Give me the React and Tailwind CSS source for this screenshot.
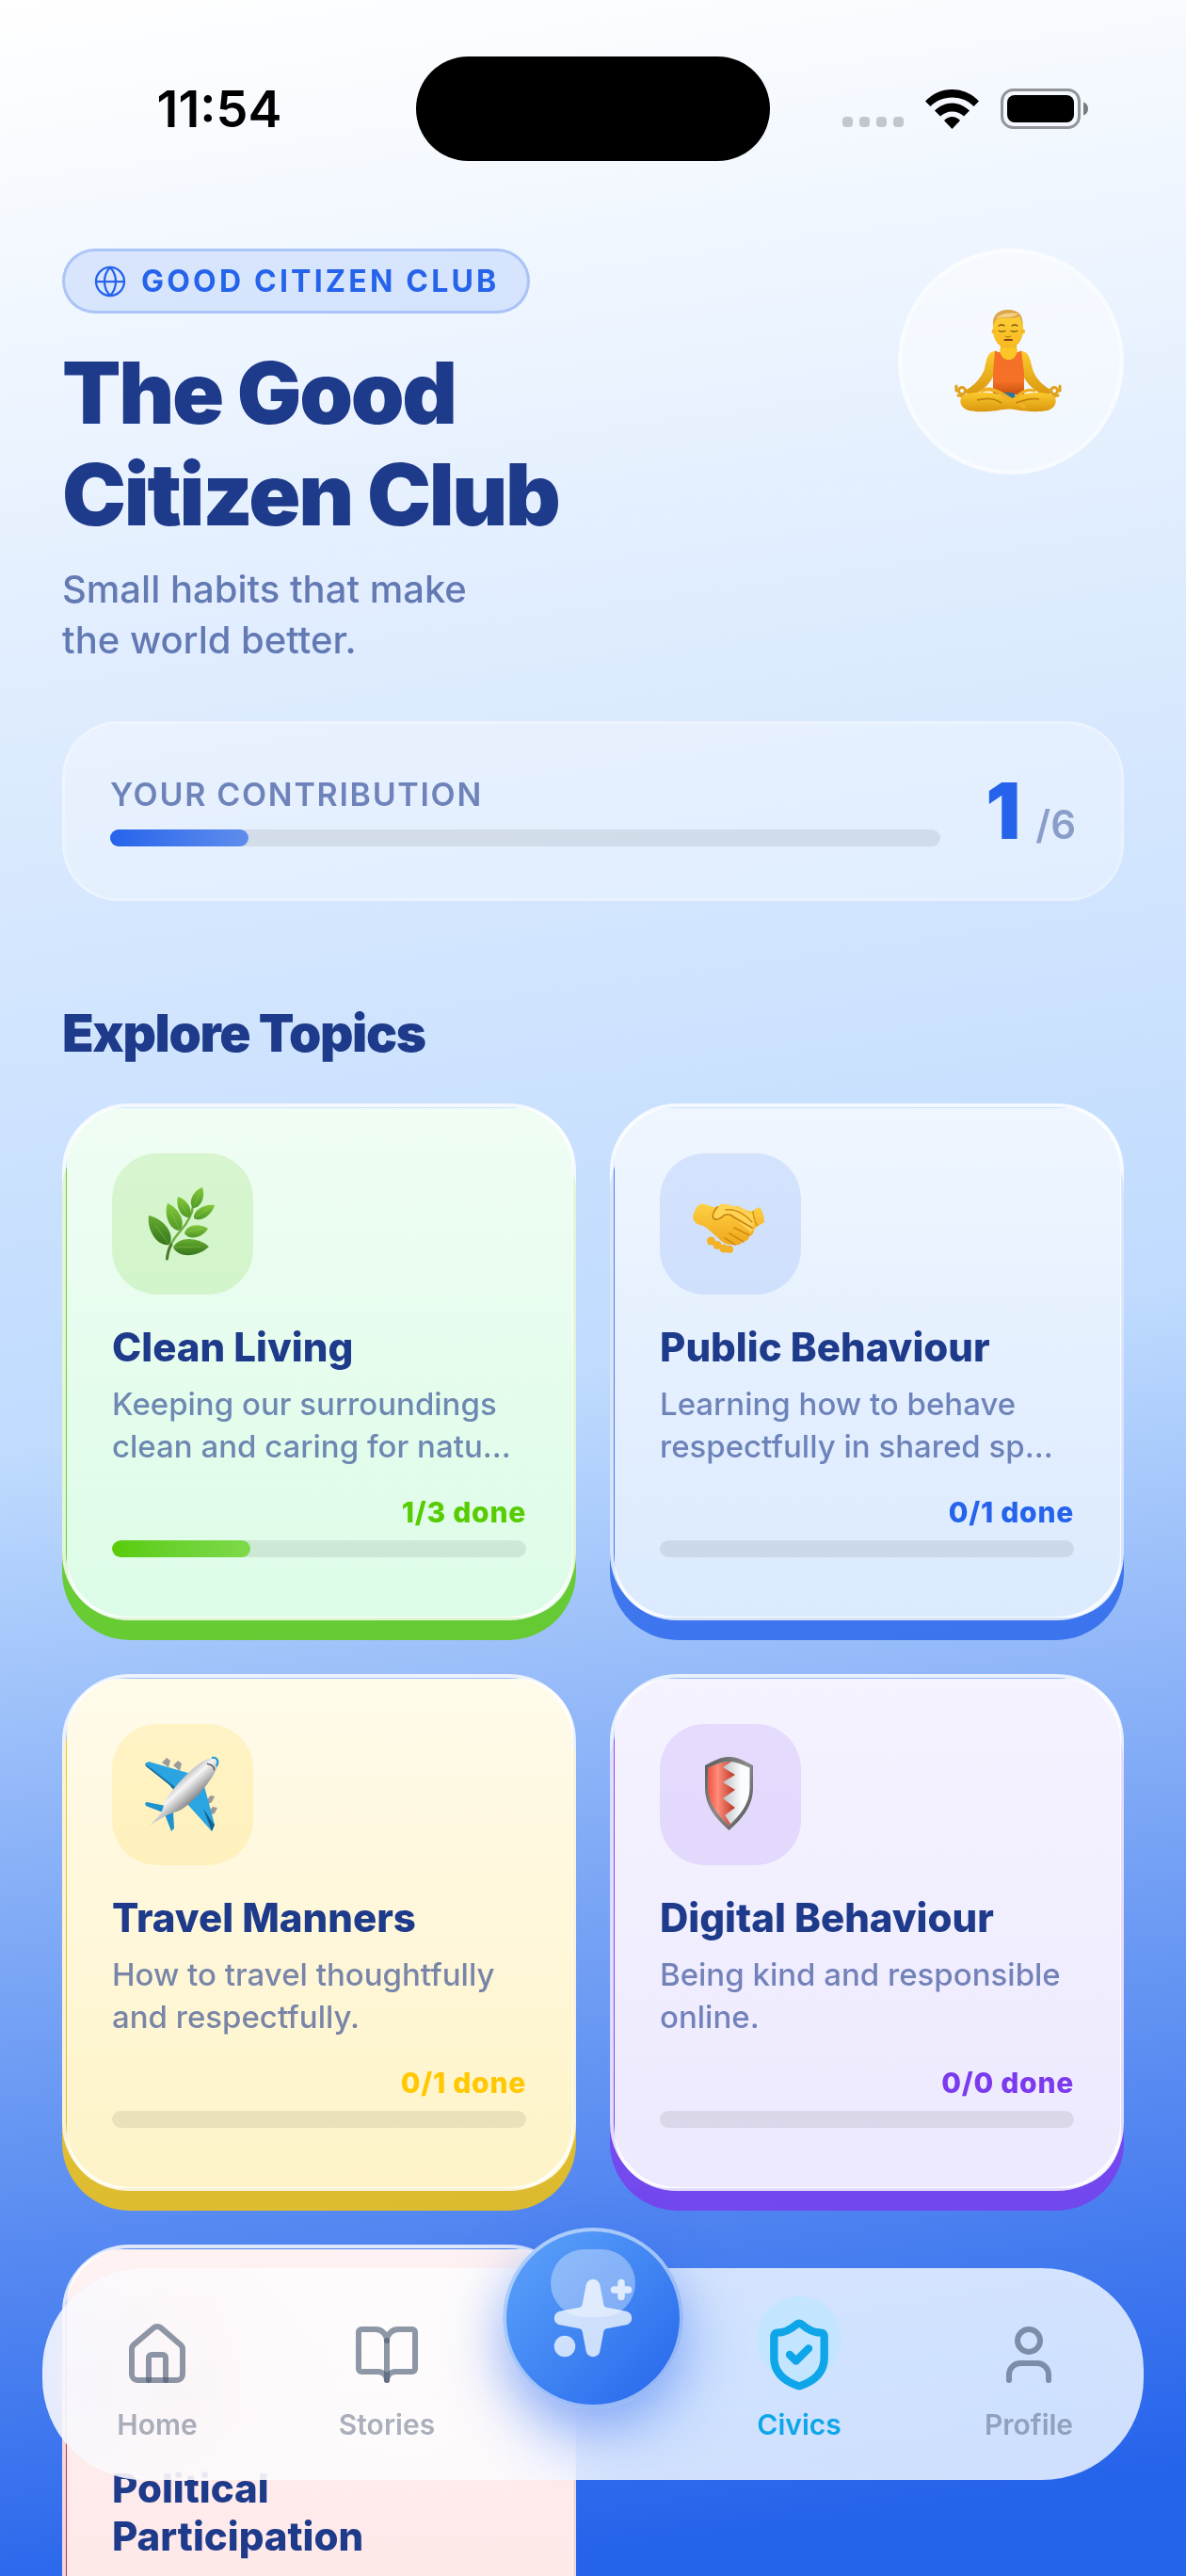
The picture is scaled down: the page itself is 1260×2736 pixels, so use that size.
import React from "react";
import { BookOpen, Globe, House, ShieldCheck, Sparkles, User } from "lucide-react";

/* ---------- illustrations ---------- */

function leafPath([tx, ty], [bx, by], w) {
  const dx = tx - bx;
  const dy = ty - by;
  const len = Math.hypot(dx, dy);
  const nx = (-dy / len) * w;
  const ny = (dx / len) * w;
  const at = (k, s) => `${bx + dx * k + nx * s} ${by + dy * k + ny * s}`;
  return `M${bx} ${by}C${at(0.15, 1)} ${at(0.7, 0.9)} ${tx} ${ty}C${at(0.7, -0.9)} ${at(0.15, -1)} ${bx} ${by}Z`;
}

const LEAVES = [
  { tip: [39, 66], base: [61, 97], w: 12, dark: true },
  { tip: [59, 53], base: [72, 82], w: 10 },
  { tip: [70, 46], base: [82, 68], w: 8 },
  { tip: [96, 36], base: [86, 58], w: 8 },
  { tip: [109, 55], base: [87, 69], w: 8 },
  { tip: [102, 80], base: [77, 85], w: 9 },
  { tip: [103, 99], base: [65, 100], w: 12, dark: true },
];

function HerbArt() {
  return (
    <svg viewBox="0 0 150 150" className="size-full" aria-hidden="true">
      <defs>
        <linearGradient id="leafLight" x1="0" y1="0" x2="0" y2="1">
          <stop offset="0" stopColor="#82ca3a" />
          <stop offset="1" stopColor="#4f9626" />
        </linearGradient>
        <linearGradient id="leafDark" x1="0" y1="0" x2="0" y2="1">
          <stop offset="0" stopColor="#66ac30" />
          <stop offset="1" stopColor="#36761c" />
        </linearGradient>
      </defs>
      <path d="M58.500 112C60 98 66 90 73 82S85 66 86 56" fill="none" stroke="#6fae3c" strokeWidth="2.500" strokeLinecap="round" />
      <path d="M58.500 112C59 106 60.500 101 63 97" fill="none" stroke="#4b7a2c" strokeWidth="3" strokeLinecap="round" />
      {LEAVES.map((l) => (
        <path key={l.tip.join()} d={leafPath(l.tip, l.base, l.w)} fill={l.dark ? "url(#leafDark)" : "url(#leafLight)"} />
      ))}
      <path d="M61 97 46 76M72 82 63 62M66 100 94 99M79 84 96 80M89 68 102 59M87 56 93 43M81 67 73 53" fill="none" stroke="#9bd35a" strokeOpacity=".4" strokeWidth="1" />
    </svg>
  );
}

function HandshakeArt() {
  return (
    <svg viewBox="0 0 150 150" className="size-full" aria-hidden="true">
      <defs>
        <linearGradient id="skin" x1="0" y1="0" x2="0" y2="1">
          <stop offset="0" stopColor="#fed044" />
          <stop offset="1" stopColor="#f0a81c" />
        </linearGradient>
      </defs>
      <g fill="#f3b227">
        <circle cx="54.500" cy="93" r="4.500" />
        <circle cx="61" cy="97.500" r="4.500" />
        <circle cx="68" cy="101" r="4.500" />
        <circle cx="74" cy="102" r="4" />
      </g>
      <path d="M35 68C36 61 40 54 45 53.500C50 54 55 58 61 57L84 56C89 60 95 62 99 61C101 59 104 57 106 57.500C109 61 111 67 111 73C107 76 103 77 100 81C100 86 97 88 95 87.500C95 92 91 94 88 93C87 97 82 98 78 97C72 98 66 94 62 90C56 85 51 79 46 77C41 76 36 74 35 68Z" fill="url(#skin)" />
      <path d="M56 68C58 61 60 55 66 54C74 53 80 58 90 61C97 64 99 63 100 70C100 76 99 80 97 84L78 68C73 65 69 67 66 69C62 72 56 73 56 68Z" fill="#ffd455" />
      <path d="M61 57C57 62 55 66 57 69C60 72 65 69 68 66C72 64 76 65 79 68L98 79" fill="none" stroke="#c98410" strokeWidth="1.800" strokeLinecap="round" />
      <path d="M79 79 95 87M74 85 89 94M69 90 80 97M70 60C81 58 92 66 98 73" fill="none" stroke="#cf8a12" strokeWidth="1.500" strokeLinecap="round" />
      <path d="M99 61C99 66 101 74 104 77" fill="none" stroke="#d89518" strokeWidth="1.500" />
    </svg>
  );
}

function PlaneArt() {
  return (
    <svg viewBox="0 0 150 150" className="size-full" aria-hidden="true">
      <defs>
        <linearGradient id="hull" gradientUnits="userSpaceOnUse" x1="66" y1="60" x2="86" y2="82">
          <stop offset="0" stopColor="#a9a9ab" />
          <stop offset=".4" stopColor="#f6f6f7" />
          <stop offset="1" stopColor="#858588" />
        </linearGradient>
      </defs>
      <g fill="#9b9a9b">
        <path d="m53 41 5-5 4 3-2 7ZM65 44l5-5 4 3-2 8ZM101 80l4-4 4 1-3 6-5 3ZM104 91l3-3 5 1-3 6-6 2Z" />
      </g>
      <path d="M35 42 39 40 84 53 66 71 60 63Z" fill="#2ba4e2" />
      <path d="M35 42 36 45 60 64 66 70 67 67Z" fill="#166f9e" />
      <path d="M98 66 109 107 106 114 79 84Z" fill="#2ba4e2" />
      <path d="M106 114 109 107 107 105 97 90Z" fill="#15618b" />
      <path d="M35 84 37 83 57 87 54 94 36 87Z" fill="#1d93cf" />
      <path d="M56 96 65 93 66 111 63 114Z" fill="#1d93cf" />
      <path d="M112 37C115 45 106 58 98 68C89 79 76 92 66 94C62 95 57 97 40 108C52 96 54 92 55 86C57 78 70 63 80 53C92 42 103 33 112 37Z" fill="url(#hull)" />
      <path d="M106 36C112 35 114 40 111 45" fill="none" stroke="#2098d4" strokeWidth="2" />
      <path d="M101 42C103 44 104 42 107 45S107 47 109 49" fill="none" stroke="#555" strokeWidth="1.500" />
    </svg>
  );
}

function ShieldArt() {
  return (
    <svg viewBox="0 0 150 150" className="size-full" aria-hidden="true">
      <defs>
        <linearGradient id="rim" x1="0" y1="0" x2="1" y2="1">
          <stop offset="0" stopColor="#595959" />
          <stop offset=".5" stopColor="#8b8b8b" />
          <stop offset="1" stopColor="#4c4c4c" />
        </linearGradient>
        <linearGradient id="silver" x1="0" y1="0" x2="1" y2="0">
          <stop offset=".2" stopColor="#a9afb2" />
          <stop offset=".8" stopColor="#fbfcfd" />
        </linearGradient>
        <linearGradient id="red" x1="0" y1="0" x2="1" y2="0">
          <stop offset="0" stopColor="#f2553f" />
          <stop offset=".35" stopColor="#ff8c7b" />
          <stop offset="1" stopColor="#b93622" />
        </linearGradient>
      </defs>
      <path d="M48 44C56 40 64 35 73.500 35S91 40 99 44V68C99 88 86 102 73.500 113C61 102 48 88 48 68Z" fill="url(#rim)" />
      <path d="M51.500 46.500C60 43 66 40 73.500 40S87 43 95.500 46.500V68C95.500 85 85 97 73.500 108C62 97 51.500 85 51.500 68Z" fill="url(#silver)" />
      <path d="M76 40C66 40 60 43 51.500 46.500V68C51.500 85 62 97 73.500 108L75 106 69 97 80 89 67 79 80 70 67 62 80 54 67 46Z" fill="url(#red)" />
    </svg>
  );
}

function BallotArt() {
  return (
    <svg viewBox="0 0 150 150" className="size-full" aria-hidden="true">
      <path d="M40 68h70v44H40Z" fill="#9aa3ad" />
      <path d="M58 38h34v38H58Z" fill="#fff" />
    </svg>
  );
}

function YogiArt() {
  return (
    <svg viewBox="0 0 240 240" className="size-full" aria-hidden="true">
      <defs>
        <linearGradient id="face" x1="0" y1="0" x2="0" y2="1">
          <stop offset="0" stopColor="#ffd23a" />
          <stop offset="1" stopColor="#f6b91f" />
        </linearGradient>
        <linearGradient id="limb" x1="0" y1="0" x2="0" y2="1">
          <stop offset="0" stopColor="#fccb2c" />
          <stop offset="1" stopColor="#d9960f" />
        </linearGradient>
        <linearGradient id="vest" x1="0" y1="0" x2="0" y2="1">
          <stop offset="0" stopColor="#f4702a" />
          <stop offset=".7" stopColor="#f57126" />
          <stop offset="1" stopColor="#c9500f" />
        </linearGradient>
      </defs>
      <path d="M104 109C96 109 94 116 92 128C88 138 79 148 70 151L76 157C88 153 99 144 103 131Z" fill="url(#limb)" />
      <path d="M130 109C139 109 140 116 143 128C146 138 156 148 165 151L158 157C147 153 136 144 131 131Z" fill="url(#limb)" />
      <g fill="none" stroke="#e0a21a" strokeWidth="3" strokeLinecap="round">
        <circle cx="68" cy="151" r="3.500" />
        <circle cx="166" cy="151" r="3.500" />
        <path d="M62 146v5M64 156l8 1M172 146v5M170 156l-8 1" />
      </g>
      <path d="M109 98h17v14h-17Z" fill="#e5a51a" />
      <path d="M103 108C106 112 129 112 131 108L134 132V155H101V132Z" fill="url(#vest)" />
      <path d="M108 107C109 122 126 122 127 107L124 104H111Z" fill="#fcc629" />
      <path d="M112 153h11l4 8-4 9h-12l-4-9Z" fill="#32759b" />
      <path d="M68 157C75 152 92 152 104 154L132 166C126 171 115 170 106 172C90 174 76 174 71 170C66 167 65 161 68 157Z" fill="url(#limb)" />
      <path d="M166 157C158 152 140 152 128 156L112 163C106 166 110 169 124 171C140 174 158 174 163 170C168 167 169 161 166 157Z" fill="url(#limb)" />
      <path d="M89 151C98 147 107 152 116 158S131 166 134 168" fill="none" stroke="#f0b021" strokeWidth="4" strokeLinecap="round" />
      <path d="M145 151C137 148 130 154 126 157" fill="none" stroke="#eeb021" strokeWidth="3" strokeLinecap="round" />
      <path d="M84 161C95 158 103 159 110 164M150 160C140 158 132 162 125 164" fill="none" stroke="#ba7c0b" strokeWidth="1.500" />
      <path d="M101 84C101 72 106 66 117 66S133 72 133 84C134 97 126 106 117 106S100 97 101 84Z" fill="url(#face)" />
      <path d="M101 82C100 70 107 65 117 65S134 70 132 82C131 78 131 75 129 72C122 76 111 72 105 75C103 77 102 79 101 82Z" fill="#dca548" />
      <path d="M104 74C109 68 121 68 128 69C122 75 111 72 104 74Z" fill="#f3d184" />
      <circle cx="102" cy="88" r="2.500" fill="#f5ba22" />
      <circle cx="132.500" cy="88" r="2.500" fill="#f5ba22" />
      <path d="M107 82q3-2 6 0M121 82q3-2 6 0M107 87.500q3 1.500 7 0M120 87.500q3 1.500 7 0" fill="none" stroke="#7a5410" strokeWidth="1.300" strokeLinecap="round" />
      <path d="M114 93q3 2 6 0" fill="none" stroke="#b97d12" strokeWidth="1.500" />
      <path d="M113.500 97h7.500" stroke="#84421b" strokeWidth="2" strokeLinecap="round" />
    </svg>
  );
}

/* ---------- status bar ---------- */

function StatusBar() {
  return (
    <div className="flex items-center pt-[60px]">
      <div className="flex-1">
        <div className="pl-6 text-center text-[54px]/[60px] font-semibold text-black">11:54</div>
      </div>
      <div className="h-[111px] w-[376px] rounded-full bg-black" />
      <div className="flex-1">
        <div className="flex items-center pl-[77px]">
          <div className="flex gap-[7px] pt-7">
            <span className="size-[11px] rounded-sm bg-black/20" />
            <span className="size-[11px] rounded-sm bg-black/20" />
            <span className="size-[11px] rounded-sm bg-black/20" />
            <span className="size-[11px] rounded-sm bg-black/20" />
          </div>
          <svg viewBox="0 0 57 42" className="ml-[23px] h-[42px] w-[57px]" aria-label="Wi-Fi">
            <path d="M28.500 0C39.500 0 49.500 4.500 57 12.500L51.500 18C45.500 12 37.500 8.500 28.500 8.500S11.500 12 5.500 18L0 12.500C7.500 4.500 17.500 0 28.500 0Z" />
            <path d="M28.500 14.500C35.500 14.500 42 17.500 47 22.500L41 28.500C37.500 25.500 33.500 23.500 28.500 23.500S19.500 25.500 16 28.500L10 22.500C15 17.500 21.500 14.500 28.500 14.500Z" />
            <path d="M28.500 29C31.500 29 34.500 30.500 37 33L28.500 42L20 33C22.500 30.500 25.500 29 28.500 29Z" />
          </svg>
          <svg viewBox="0 0 94 43" className="ml-[23px] h-[43px] w-[94px]" aria-label="Battery">
            <rect x="1.500" y="1.500" width="82" height="40" rx="12" fill="none" stroke="#000" strokeOpacity=".4" strokeWidth="3" />
            <rect x="7" y="7" width="71" height="29" rx="8" />
            <path d="M88 14.500C91 15.500 93 18 93 21.500S91 27.500 88 28.500Z" fillOpacity=".5" />
          </svg>
        </div>
      </div>
    </div>
  );
}

/* ---------- topics ---------- */

const TOPICS = [
  {
    title: "Clean Living",
    text: "Keeping our surroundings clean and caring for natu...",
    done: 1,
    total: 3,
    Art: HerbArt,
    face: "bg-linear-to-b from-[#f0fdf4] to-[#dcfce7]",
    edge: "bg-[#58cc02]/80",
    tile: "bg-[#58cc02]/15",
    label: "text-[#58cc02]",
    bar: "bg-linear-to-r from-[#58cc02] to-[#7ed94a]",
  },
  {
    title: "Public Behaviour",
    text: "Learning how to behave respectfully in shared sp...",
    done: 0,
    total: 1,
    Art: HandshakeArt,
    face: "bg-linear-to-b from-[#eff6ff] to-[#dbeafe]",
    edge: "bg-[#2563eb]/80",
    tile: "bg-[#2563eb]/12",
    label: "text-[#2563eb]",
    bar: "bg-[#2563eb]",
  },
  {
    title: "Travel Manners",
    text: "How to travel thoughtfully and respectfully.",
    done: 0,
    total: 1,
    Art: PlaneArt,
    face: "bg-linear-to-b from-[#fffbeb] to-[#fef3c7]",
    edge: "bg-[#ffc800]/80",
    tile: "bg-[#ffc800]/15",
    label: "text-[#ffc800]",
    bar: "bg-[#ffc800]",
  },
  {
    title: "Digital Behaviour",
    text: "Being kind and responsible online.",
    done: 0,
    total: 0,
    Art: ShieldArt,
    face: "bg-linear-to-b from-[#f5f3ff] to-[#ede9fe]",
    edge: "bg-[#7c3aed]/80",
    tile: "bg-[#7c3aed]/12",
    label: "text-[#7c3aed]",
    bar: "bg-[#7c3aed]",
  },
  {
    title: "Political\nParticipation",
    text: "",
    done: 0,
    total: 1,
    Art: BallotArt,
    face: "bg-linear-to-b from-[#fef2f2] to-[#fee2e2]",
    edge: "bg-[#dc2626]/80",
    tile: "bg-[#dc2626]/12",
    label: "text-[#dc2626]",
    bar: "bg-[#dc2626]",
  },
];

function TopicCard({ title, text, done, total, Art, face, edge, tile, label, bar }) {
  const percent = total ? (done / total) * 100 : 0;
  return (
    <a href="#topic" className="relative isolate mb-[21px] block px-[53px] pt-[53px] pb-[67px]">
      <span className={`absolute inset-x-0 top-[21px] -bottom-[21px] -z-30 rounded-[72px] ${edge}`} />
      <span className={`absolute top-[5px] right-[3px] bottom-[3px] left-[5px] -z-20 rounded-[58px] ${face}`} />
      <span className="absolute inset-0 -z-10 rounded-[72px] border-4 border-white/80" />
      <div className={`size-[150px] rounded-[48px] ${tile}`}>
        <Art />
      </div>
      <h3 className="mt-[30px] text-[42px]/[51px] font-extrabold whitespace-pre-line text-[#1e3a8a]">{title}</h3>
      <p className="mt-[13px] line-clamp-2 h-[90px] text-[33px]/[45px] font-medium text-[#1e3a8a]/60">{text}</p>
      <div className={`mt-[29px] text-right text-[30px]/[36px] font-extrabold tracking-wide ${label}`}>
        {done}/{total} done
      </div>
      <div className="mt-3 h-[18px] overflow-hidden rounded-full bg-black/8">
        <div className={`h-full rounded-full ${bar}`} style={{ width: `${percent}%` }} />
      </div>
    </a>
  );
}

/* ---------- bottom navigation ---------- */

function NavItem({ Icon, label }) {
  return (
    <button type="button" className="flex flex-1 flex-col items-center pt-14 text-slate-600/45">
      <Icon className="size-[72px] text-slate-600/60" strokeWidth={2} />
      <span className="mt-5 text-[30px]/[36px] font-semibold">{label}</span>
    </button>
  );
}

function ActiveNavItem({ Icon, label }) {
  return (
    <button type="button" aria-current="page" className="relative flex flex-1 flex-col items-center pt-[52px] text-[#0ea5e9]">
      <span className="absolute top-[30px] size-[90px] rounded-full bg-[#a5ecff]/30" />
      <Icon className="relative size-20" strokeWidth={2.5} />
      <span className="mt-4 text-[30px]/[36px] font-semibold">{label}</span>
    </button>
  );
}

function BottomNav() {
  return (
    <nav className="absolute inset-x-[45px] bottom-[102px] z-20 h-[225px]">
      <div className="absolute inset-0 rounded-[108px] bg-[#fcfeff]/80 backdrop-blur-[60px] backdrop-saturate-150" />
      <div className="relative flex h-full">
        <NavItem Icon={House} label="Home" />
        <NavItem Icon={BookOpen} label="Stories" />
        <div className="flex w-[194px] justify-center">
          <button
            type="button"
            aria-label="Create"
            className="relative -mt-[43px] flex size-48 items-center justify-center rounded-full border-4 border-white/50 bg-linear-to-br from-[#60a5fa] to-[#2563eb] bg-origin-border shadow-[0_24px_60px_rgba(37,99,235,0.5)]"
          >
            <span className="absolute top-[19px] h-[72px] w-[90px] rounded-[36px] bg-white/35" />
            <Sparkles className="relative size-[90px] fill-current text-white opacity-75" />
          </button>
        </div>
        <ActiveNavItem Icon={ShieldCheck} label="Civics" />
        <NavItem Icon={User} label="Profile" />
      </div>
    </nav>
  );
}

/* ---------- screen ---------- */

export default function App() {
  return (
    <div className="relative h-screen overflow-hidden bg-[linear-gradient(172deg,#ffffff_0%,#dbeafe_29%,#bfdbfe_53%,#2563eb_96%)] font-['Inter',sans-serif]">
      <div className="h-full overflow-y-auto pb-80 [scrollbar-width:none]">
        <StatusBar />

        <main className="px-[66px] pt-[93px]">
          <header className="flex items-start justify-between">
            <div>
              <div className="inline-flex h-[69px] items-center gap-[15px] rounded-full border-3 border-[#2563eb]/25 bg-[#2563eb]/12 px-[30px] text-[#2563eb]">
                <Globe className="size-9" strokeWidth={1.5} />
                <span className="text-[32px]/[36px] font-bold tracking-widest">GOOD CITIZEN CLUB</span>
              </div>
              <h1 className="mt-[30px] text-[91px]/[108px] font-black tracking-tight text-[#1e3a8a]">
                The Good
                <br />
                Citizen Club
              </h1>
              <p className="mt-5 text-[40px]/[54px] font-medium text-[#1e3a8a]/65">
                Small habits that make
                <br />
                the world better.
              </p>
            </div>
            <div className="size-60 shrink-0 rounded-full border-[5px] border-white/70 bg-white/50 bg-clip-padding">
              <div className="-m-[5px] size-60">
                <YogiArt />
              </div>
            </div>
          </header>

          <section className="mt-[59px] flex h-[191px] items-center gap-12 rounded-[60px] border-3 border-white/50 bg-white/35 bg-clip-padding px-12">
            <div className="flex-1 pt-0.5">
              <h2 className="text-[34px]/[36px] font-semibold tracking-wider text-[#1e3a8a]/60">YOUR CONTRIBUTION</h2>
              <div className="mt-[19px] h-[18px] rounded-full bg-black/8">
                <div className="h-full w-1/6 rounded-full bg-linear-to-r from-[#2563eb] to-[#5f8ded]" />
              </div>
            </div>
            <div className="flex items-baseline gap-4">
              <span className="text-[82px]/[84px] font-black text-[#2563eb]">1</span>
              <span className="text-[42px]/[42px] font-semibold text-[#1e3a8a]/45">/6</span>
            </div>
          </section>

          <h2 className="mt-[110px] text-[55px]/[60px] font-black tracking-tight text-[#1e3a8a]">Explore Topics</h2>
          <div className="mt-[45px] grid grid-cols-2 gap-9">
            {TOPICS.map((topic) => (
              <TopicCard key={topic.title} {...topic} />
            ))}
          </div>
        </main>
      </div>

      <BottomNav />
    </div>
  );
}
